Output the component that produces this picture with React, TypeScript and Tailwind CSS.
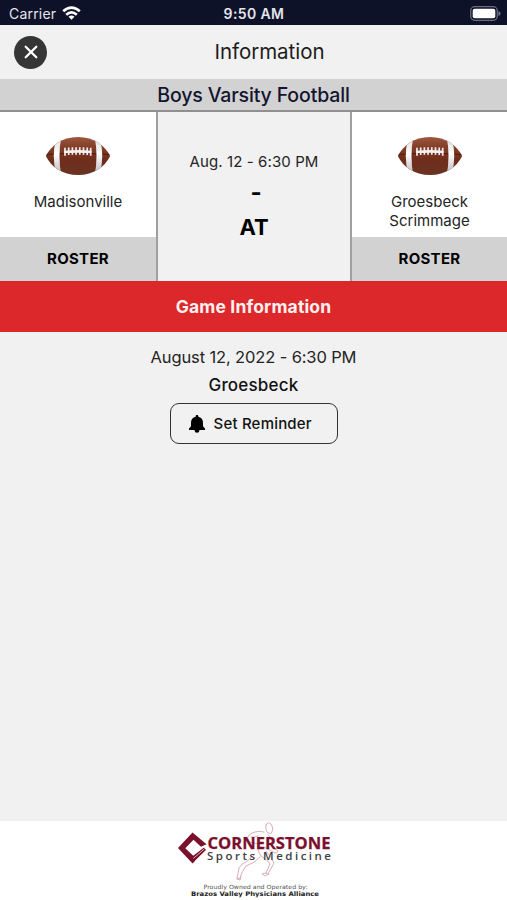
import React from "react";

function Football({ id }: { id: string }) {
  return (
    <svg width="66" height="40" viewBox="0 0 66 40" className="block">
      <defs>
        <linearGradient id={`${id}-skin`} x1="0" y1="0" x2="0" y2="1">
          <stop offset="0" stopColor="#a05a40" />
          <stop offset="0.25" stopColor="#85402a" />
          <stop offset="0.6" stopColor="#6e2d1a" />
          <stop offset="1" stopColor="#6b3423" />
        </linearGradient>
        <linearGradient id={`${id}-band`} x1="0" y1="0" x2="0" y2="1">
          <stop offset="0" stopColor="#d9d4d4" />
          <stop offset="0.45" stopColor="#ffffff" />
          <stop offset="1" stopColor="#b8b0b2" />
        </linearGradient>
        <clipPath id={`${id}-shape`}>
          <path d="M.8 20C6 9.500 17 .9 33 .9S60 9.500 65.200 20C60 30.500 49 39.100 33 39.100S6 30.500.8 20Z" />
        </clipPath>
      </defs>
      <g clipPath={`url(#${id}-shape)`}>
        <rect width="66" height="40" fill={`url(#${id}-skin)`} />
        <path d="M0 18.500Q33 15.500 66 18.500" fill="none" stroke="#4e1b10" strokeWidth="1" />
        <path d="M11 3Q6.500 20 11 37L16.500 40Q12.500 20 16.500 0Z" fill={`url(#${id}-band)`} />
        <path d="M55 3Q59.500 20 55 37L49.500 40Q53.500 20 49.500 0Z" fill={`url(#${id}-band)`} />
      </g>
      <path d="M19 16Q33 14.800 46.500 16" fill="none" stroke="#f5eeee" strokeWidth="2.600" />
      <path
        d="M20 11.800v8M23.700 11.500v7.500M27.400 11.300v7.500M31.100 11.200v7.500M34.800 11.200v7.500M38.500 11.300v7.500M42.200 11.500v7.500M45.700 11.800v8"
        stroke="#f5eeee"
        strokeWidth="1.700"
      />
    </svg>
  );
}

function Team({ id, lines }: { id: string; lines: string[] }) {
  return (
    <div className="flex h-full flex-col bg-white">
      <div className="flex h-[125px] flex-col items-center pt-[24px]">
        <Football id={id} />
        <div className="mt-[17px] text-center text-[15px] leading-[18.500px] text-[#242424]">
          {lines.map((line) => (
            <div key={line}>{line}</div>
          ))}
        </div>
      </div>
      <div className="flex h-[44px] items-center justify-center bg-[#d2d2d2] pt-px text-[15px] font-bold tracking-[0.300px] text-black">
        ROSTER
      </div>
    </div>
  );
}

function SponsorLogo() {
  return (
    <svg width="180" height="79" viewBox="165 821 180 79" className="block">
      <g fill="none" stroke="#c98c9b" strokeWidth="1" strokeLinejoin="round" strokeLinecap="round" opacity="0.700">
        <path d="M266 825q2-4 5-1 3 4 1 8-1 3-4 1-3-3-2-8Z" />
        <path d="M264 832q-9-2-15 3-3 4 1 7l8 2M251 837q4 1 7-1" />
        <path d="M268 835q6 3 3 10l7 6q-1 3-3 2l-11-6" />
        <path d="M258 843q-1 8 3 13 7 4 9 8l-4 9 2 1 6-11q-3-7-8-12" />
        <path d="M260 857q-5 6-14 9-4 5-6 12l-3 1 2-11q2-4 7-6l9-8" />
        <path d="M266 873l-4 1 3 2 4-2M237 879l3 1 1-3" />
      </g>
      <path
        d="M192.500 832.500 206.500 844.300 201 846.800 193.500 839.800 185.300 848.200 193.200 855.800 204 847.500 206 850 192.500 863.500 178 848Z"
        fill="#7b102c"
      />
      <path d="m195 861 10.500-10M193.500 858.300l11-9.500" stroke="white" strokeWidth="0.700" />
      <g fontFamily='"Open Sans", "Liberation Sans", sans-serif'>
        <text x="207.500" y="848.500" textLength="123" lengthAdjust="spacingAndGlyphs" fontSize="16.500" fontWeight="700" fill="#7b102c" stroke="#7b102c" strokeWidth="0.250">
          CORNERSTONE
        </text>
        <text x="207" y="860.300" textLength="124" fontSize="11.500" fontWeight="600" fill="#404040">
          Sports Medicine
        </text>
      </g>
      <g fontFamily='"DejaVu Sans", sans-serif'>
        <text x="203.500" y="888.500" textLength="104" lengthAdjust="spacingAndGlyphs" fontSize="5.800" fill="#555555">
          Proudly Owned and Operated by:
        </text>
        <text x="191" y="895.500" textLength="128" lengthAdjust="spacingAndGlyphs" fontSize="6.300" fontWeight="700" fill="#222222">
          Brazos Valley Physicians Alliance
        </text>
      </g>
    </svg>
  );
}

export default function App() {
  return (
    <div className="flex h-[900px] w-[507px] flex-col overflow-hidden whitespace-nowrap bg-[#f1f1f1] font-['Inter','Liberation_Sans',sans-serif]">
      <div className="grid h-[25px] shrink-0 grid-cols-3 items-center bg-[#0e1229] pt-[2px] text-[14px] text-[#e4e4ed]">
        <div className="flex items-center gap-[6px] pl-[9px]">
          <span className="tracking-[0.200px]">Carrier</span>
          <svg width="19" height="14" viewBox="0 0 19 14" fill="none" stroke="white" strokeWidth="2.700" className="-mt-px">
            <path d="M1.200 5.300Q9.500-2 17.800 5.300M4.200 8.700Q9.500 4.200 14.800 8.700" />
            <path d="M9.500 13.800 6.500 10.700Q9.500 8.500 12.500 10.700Z" fill="white" stroke="none" />
          </svg>
        </div>
        <div className="pl-px text-center font-semibold tracking-[0.400px]">9:50 AM</div>
        <div className="flex justify-end pr-[6px]">
          <svg width="31" height="15" viewBox="0 0 31 15" className="-mt-px">
            <rect x=".7" y=".7" width="26.600" height="13.600" rx="4" fill="none" stroke="#696c7e" strokeWidth="1.300" />
            <rect x="2.700" y="2.700" width="22.600" height="9.600" rx="2" fill="white" />
            <path d="M28.500 5q2 1 2 2.500t-2 2.500Z" fill="#7b7e8d" />
          </svg>
        </div>
      </div>
      <div className="grid h-[54px] shrink-0 grid-cols-[1fr_auto_1fr] items-center">
        <button className="ml-[14px] flex size-[33px] items-center justify-center rounded-full bg-[#363636]" aria-label="Close">
          <svg width="14" height="14" viewBox="0 0 14 14" stroke="white" strokeWidth="2.300" strokeLinecap="round">
            <path d="m1.700 1.700 10.600 10.600M12.300 1.700 1.700 12.300" />
          </svg>
        </button>
        <h1 className="pl-[32px] pt-px text-[20.500px] tracking-[-0.050px] text-[#1d1d1d]">Information</h1>
      </div>
      <div className="flex h-[33px] shrink-0 items-center justify-center border-b-[2px] border-[#8f8f8f] bg-[#d2d2d2] pt-[2px] text-[19.500px] font-medium tracking-[-0.150px] text-[#14152f]">
        Boys Varsity Football
      </div>
      <div className="grid h-[169px] shrink-0 grid-cols-[156px_196px_155px]">
        <Team id="away" lines={["Madisonville"]} />
        <div className="flex flex-col items-center border-x-[2px] border-[#a0a0a0] pt-[40px] text-black">
          <div className="text-[15px] leading-[19px] tracking-[0.100px] text-[#242424]">Aug. 12 - 6:30 PM</div>
          <div className="mt-[7px] pl-[4px] text-[24px] font-bold leading-[30px]">-</div>
          <div className="mt-[4px] text-[22px] font-bold leading-[30px]">AT</div>
        </div>
        <Team id="home" lines={["Groesbeck", "Scrimmage"]} />
      </div>
      <h2 className="flex h-[51px] shrink-0 items-center justify-center bg-[#dc272b] pt-px text-[17.500px] font-bold tracking-[0.150px] text-[#fff0ef]">
        Game Information
      </h2>
      <main className="flex grow flex-col items-center pt-[14px]">
        <div className="text-[16.500px] leading-[22px] tracking-[-0.130px] text-[#242424]">August 12, 2022 - 6:30 PM</div>
        <div className="mt-[5px] text-[17px] font-medium leading-[24px] tracking-[0.200px] text-[#111111]">Groesbeck</div>
        <button className="mt-[6px] flex h-[41px] w-[168px] items-center rounded-[9px] border-[1.500px] border-[#333333] pl-[18px] text-[15px] font-medium tracking-[0.200px] text-[#111111]">
          <svg width="16" height="18" viewBox="0 0 16 18" fill="black">
            <path d="M6.700 1.200a1.300 1.300 0 0 1 2.600 0v.6c3 .6 4.700 2.900 4.700 6v3.400L16 13.500V15H0v-1.500l2-2.300V7.800c0-3.100 1.700-5.400 4.700-6ZM5.600 15h4.800v.4a2.400 2.400 0 0 1-4.800 0Z" />
          </svg>
          <span className="ml-[9px] pt-[2px]">Set Reminder</span>
        </button>
      </main>
      <footer className="flex h-[79px] shrink-0 justify-center bg-white pl-[3px]">
        <SponsorLogo />
      </footer>
    </div>
  );
}
